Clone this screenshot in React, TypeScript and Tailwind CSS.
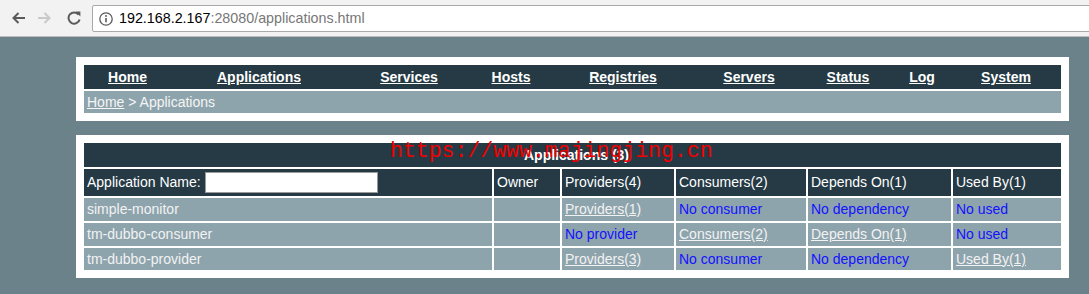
import React from 'react';

const navLinks = [
  { title: 'Home', w: 'w-[87px]' },
  { title: 'Applications', w: 'w-[176px]' },
  { title: 'Services', w: 'w-[124px]' },
  { title: 'Hosts', w: 'w-[80px]' },
  { title: 'Registries', w: 'w-[144px]' },
  { title: 'Servers', w: 'w-[108px]' },
  { title: 'Status', w: 'w-[90px]' },
  { title: 'Log', w: 'w-[58px]' },
  { title: 'System', w: 'w-[110px]' },
];

// each cell: [text, isLink]
const apps: { name: string; cells: [string, boolean][] }[] = [
  {
    name: 'simple-monitor',
    cells: [
      ['Providers(1)', true],
      ['No consumer', false],
      ['No dependency', false],
      ['No used', false],
    ],
  },
  {
    name: 'tm-dubbo-consumer',
    cells: [
      ['No provider', false],
      ['Consumers(2)', true],
      ['Depends On(1)', true],
      ['No used', false],
    ],
  },
  {
    name: 'tm-dubbo-provider',
    cells: [
      ['Providers(3)', true],
      ['No consumer', false],
      ['No dependency', false],
      ['Used By(1)', true],
    ],
  },
];

const cols = 'grid grid-cols-[408px_66px_112px_130px_143px_108px] gap-[2px]';

function BrowserBar() {
  return (
    <div className="h-[37px] bg-[#f2f2f2] border-b border-[#bdbdbd] flex items-start overflow-hidden">
      <div className="flex items-center h-[37px] pb-[1px]">
        {/* back */}
        <svg className="ml-[11px]" width="14" height="12" viewBox="0 0 14 12" fill="none" stroke="#5a5a5a" strokeWidth="2">
          <path d="M14 6H2.5M7.5 1 2.5 6l5 5" />
        </svg>
        {/* forward */}
        <svg className="ml-[13px]" width="14" height="12" viewBox="0 0 14 12" fill="none" stroke="#c9c9c9" strokeWidth="2">
          <path d="M0 6h11.5M6.5 1l5 5-5 5" />
        </svg>
        {/* reload */}
        <svg className="ml-[15px]" width="14" height="14" viewBox="0 0 14 14" fill="none">
          <path d="M11.6 3.6A5.6 5.6 0 1 0 12.6 8.4" stroke="#5a5a5a" strokeWidth="2" />
          <path d="M8.4 0.6h5v5z" fill="#5a5a5a" />
        </svg>
      </div>
      <div className="ml-[11px] mt-[5px] h-[27px] flex-1 -mr-2 bg-white border border-[#a9a9a9] rounded-[2px] flex items-center">
        <svg className="ml-[6px]" width="14" height="14" viewBox="0 0 14 14" fill="none">
          <circle cx="7" cy="7" r="6.2" stroke="#5a5a5a" strokeWidth="1.3" />
          <path d="M7 6v4.3" stroke="#5a5a5a" strokeWidth="1.6" />
          <circle cx="7" cy="4" r="0.95" fill="#5a5a5a" />
        </svg>
        <span className="ml-[6px] text-[14.3px] leading-none font-['Liberation_Sans',Arial,sans-serif]">
          <span className="text-black">192.168.2.167</span>
          <span className="text-[#777]">:28080/applications.html</span>
        </span>
      </div>
    </div>
  );
}

export default function App() {
  return (
    <div className="w-[1089px] h-[294px] overflow-hidden bg-[#6c828a] font-['Liberation_Sans',Arial,sans-serif] text-[14px]">
      <BrowserBar />

      {/* menu box */}
      <div className="ml-[76px] mt-[20px] w-[993px] bg-white p-[8px]">
        <div className="flex h-[24px] bg-[#253a45]">
          {navLinks.map((l) => (
            <div key={l.title} className={`${l.w} flex items-center justify-center`}>
              <a href="#" className="text-white font-bold underline leading-none">
                {l.title}
              </a>
            </div>
          ))}
        </div>
        <div className="mt-[2px] h-[22px] bg-[#8ea4ad] flex items-center px-[3px] text-[#f5f5f5]">
          <a href="#" className="underline">Home</a>
          <span>&nbsp;&gt; Applications</span>
        </div>
      </div>

      {/* applications box */}
      <div className="ml-[76px] mt-[14px] w-[993px] bg-white p-[8px] relative">
        <div className="h-[24px] bg-[#253a45] flex items-center justify-center pl-[8px] text-white font-bold">
          Applications (3)
        </div>
        <div className={`${cols} mt-[2px] h-[27px] text-white`}>
          <div className="bg-[#253a45] flex items-center px-[3px]">
            Application Name:
            <input className="ml-[4px] w-[173px] h-[21px] bg-white border border-[#999] outline-none" />
          </div>
          {['Owner', 'Providers(4)', 'Consumers(2)', 'Depends On(1)', 'Used By(1)'].map((h) => (
            <div key={h} className="bg-[#253a45] flex items-center px-[3px]">
              {h}
            </div>
          ))}
        </div>
        {apps.map((a, i) => (
          <div key={a.name} className={`${cols} mt-[2px] ${i === 2 ? 'h-[22px]' : 'h-[23px]'}`}>
            <div className="bg-[#8ea4ad] flex items-center px-[3px] text-[#f2f2f2]">{a.name}</div>
            <div className="bg-[#8ea4ad]" />
            {a.cells.map(([t, link], j) => (
              <div key={j} className="bg-[#8ea4ad] flex items-center px-[3px]">
                {link ? (
                  <a href="#" className="underline text-[#f2f2f2]">{t}</a>
                ) : (
                  <span className="text-[#1212ff]">{t}</span>
                )}
              </div>
            ))}
          </div>
        ))}

        {/* watermark over the picture */}
        <div className="absolute left-[314px] top-[6px] text-[21.5px] leading-none text-[#f00000] font-['Liberation_Mono',monospace] pointer-events-none">
          https://www.majingjing.cn
        </div>
      </div>
    </div>
  );
}
